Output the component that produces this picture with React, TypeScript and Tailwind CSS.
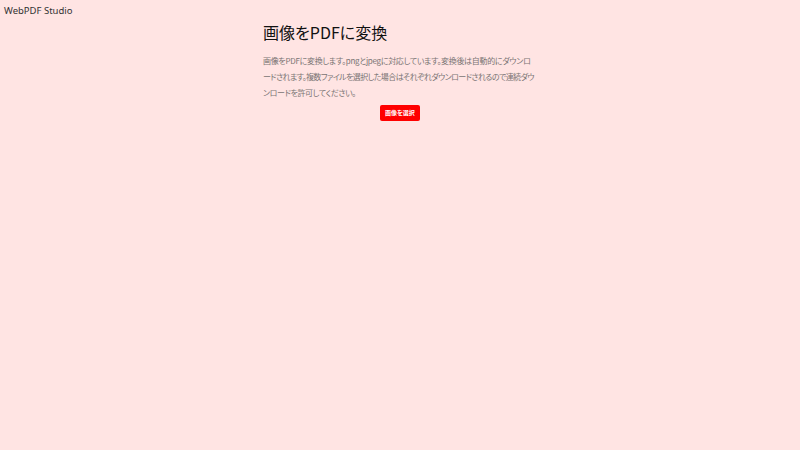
import React from "react";

export default function App() {
  const jp = "font-['Noto_Sans_CJK_JP','Noto_Sans',sans-serif] [font-feature-settings:'palt']";
  return (
    <div className="min-h-[450px] w-full bg-[#ffe4e3]">
      <div className="h-[20px] pl-[4px] pt-[4px] text-[9.5px] leading-[13px] text-[#333] font-['Noto_Sans',sans-serif]">
        WebPDF Studio
      </div>
      <div className={`mx-auto w-[274px] ${jp}`}>
        <h1 className="text-[16px] leading-[24px] text-[#111]">画像をPDFに変換</h1>
        <p className="mt-[9px] text-[8px] leading-[16px] text-[#7a7474] whitespace-nowrap">
          <span className="block tracking-[-0.3px]">画像をPDFに変換します。pngとjpegに対応しています。変換後は自動的にダウンロ</span>
          <span className="block tracking-[-0.6px]">ードされます。複数ファイルを選択した場合はそれぞれダウンロードされるので連続ダウ</span>
          <span className="block tracking-[-0.4px]">ンロードを許可してください。</span>
        </p>
        <div className="mt-[4px] flex justify-center">
          <button className="h-[16px] w-[40px] rounded-[2px] bg-[#ff0000] text-[6px] font-bold leading-[16px] text-white">
            画像を選択
          </button>
        </div>
      </div>
    </div>
  );
}
